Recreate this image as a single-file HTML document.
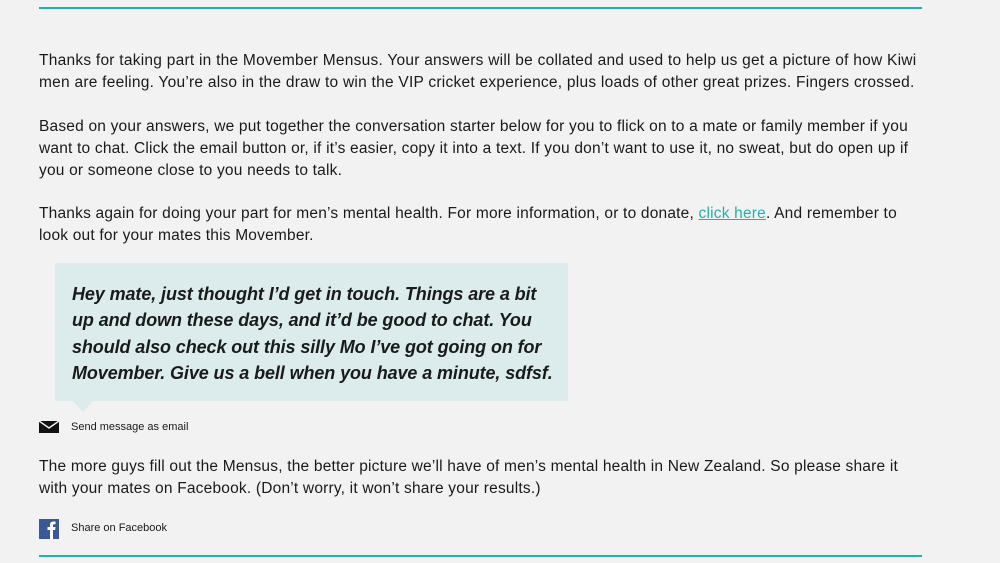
<!DOCTYPE html>
<html><head><style>
body{margin:0;width:1000px;height:563px;background:#f2f2f2;font-family:"Liberation Sans",sans-serif;color:#1a1a1a;position:relative;overflow:hidden}
.line{position:absolute;left:39px;width:883px;height:2px;background:#1fb3ad}
p{position:absolute;left:39px;margin:0;font-size:15.5px;line-height:22px;width:950px;white-space:nowrap}
a{color:#1fb3ad}
.quote{position:absolute;left:55px;top:263px;width:513px;height:138px;background:#dcecec}
.quote div{position:absolute;left:17px;top:18px;font-size:18px;font-weight:bold;font-style:italic;line-height:26.4px;width:500px;white-space:nowrap;letter-spacing:-0.1px}
.tri{position:absolute;left:73px;top:401px;width:0;height:0;border-left:10px solid transparent;border-right:10px solid transparent;border-top:11px solid #dcecec}
.small{position:absolute;left:71px;font-size:11px}
</style></head><body>
<div class="line" style="top:7px"></div>
<p style="top:50px;letter-spacing:0.25px">Thanks for taking part in the Movember Mensus. Your answers will be collated and used to help us get a picture of how Kiwi<br>men are feeling. You’re also in the draw to win the VIP cricket experience, plus loads of other great prizes. Fingers crossed.</p>
<p style="top:116px;letter-spacing:0.2px">Based on your answers, we put together the conversation starter below for you to flick on to a mate or family member if you<br>want to chat. Click the email button or, if it’s easier, copy it into a text. If you don’t want to use it, no sweat, but do open up if<br>you or someone close to you needs to talk.</p>
<p style="top:203px;letter-spacing:0.2px">Thanks again for doing your part for men’s mental health. For more information, or to donate, <a href="#">click here</a>. And remember to<br>look out for your mates this Movember.</p>
<div class="quote"><div>Hey mate, just thought I’d get in touch. Things are a bit<br>up and down these days, and it’d be good to chat. You<br>should also check out this silly Mo I’ve got going on for<br>Movember. Give us a bell when you have a minute, sdfsf.</div></div>
<div class="tri"></div>
<svg style="position:absolute;left:39px;top:421px" width="20" height="12" viewBox="0 0 20 12"><rect width="20" height="12" fill="#111"/><path d="M0 0 L10 7 L20 0" fill="none" stroke="#f2f2f2" stroke-width="1.5"/></svg>
<div class="small" style="top:421px">Send message as email</div>
<p style="top:456px;letter-spacing:0.2px">The more guys fill out the Mensus, the better picture we’ll have of men’s mental health in New Zealand. So please share it<br>with your mates on Facebook. (Don’t worry, it won’t share your results.)</p>
<svg style="position:absolute;left:39px;top:519px" width="20" height="20" viewBox="0 0 20 20"><rect width="20" height="20" fill="#3b5998"/><path d="M11 20 V11 H8.5 V8 H11 V5.8 C11 3.5 12.3 2.5 14.3 2.5 H16.5 V5.3 H15 C14.2 5.3 14 5.7 14 6.4 V8 H16.5 L16.1 11 H14 V20 Z" fill="#fff"/></svg>
<div class="small" style="top:522px">Share on Facebook</div>
<div class="line" style="top:555px"></div>
</body></html>
